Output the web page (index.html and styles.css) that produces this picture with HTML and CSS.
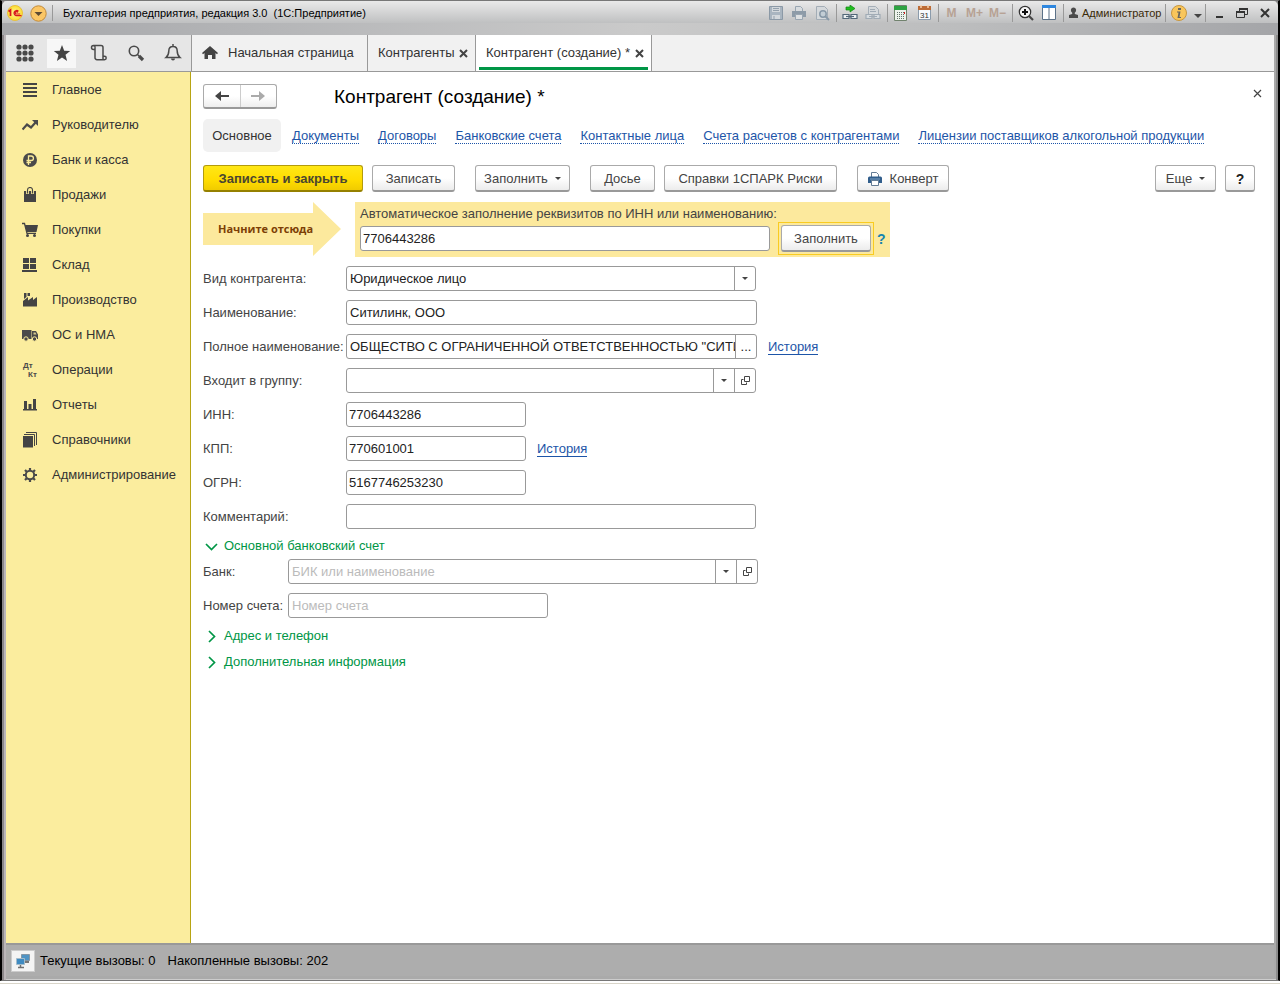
FILE: index.html
```html
<!DOCTYPE html>
<html lang="ru">
<head>
<meta charset="utf-8">
<title>Бухгалтерия предприятия, редакция 3.0</title>
<link rel="stylesheet" href="styles.css">
</head>
<body>
<div class="window">
<header class="titlebar">
  <svg class="logo" width="16" height="16" viewBox="0 0 16 16"><defs><radialGradient id="lg"><stop offset="0" stop-color="#fff6a0"/><stop offset="1" stop-color="#fbdc2c"/></radialGradient></defs><circle cx="8" cy="8" r="7.5" fill="url(#lg)" stroke="#e8bf3c"/><path d="M1.5 6.5 3.5 5v6" fill="none" stroke="#d8171d" stroke-width="1.7"/><path d="M11.500 6.300A2.600 2.600 0 1 0 9 10.600h5.500M10.600 7.600A1.200 1.200 0 1 0 9.200 9h4" fill="none" stroke="#d8171d" stroke-width="1.200"/></svg>
  <button class="flat" aria-label="Главное меню"><svg width="17" height="17" viewBox="0 0 17 17"><circle cx="8.500" cy="8.500" r="7.700" fill="#fbc665" stroke="#c28a3a"/><path d="M4.500 7h8l-4 4z" fill="#5d4a33"/></svg></button>
  <span class="title-sep"></span>
  <h1 class="app-title">Бухгалтерия предприятия, редакция 3.0&nbsp; (1С:Предприятие)</h1>
  <div class="tgroup first">
    <button class="flat cell" aria-label="Сохранить"><svg width="16" height="16" viewBox="0 0 16 16"><path d="M1.500 1.500h13v13h-13z" fill="#a9b5c0" stroke="#8b99a6"/><path d="M4 2h8v5H4zM4 10h8v4H4z" fill="#d3d8dc"/><path d="M5 3.500h6M5 5.500h6M6 11v3" stroke="#94a1ad"/></svg></button>
    <button class="flat cell" aria-label="Печать"><svg width="16" height="16" viewBox="0 0 16 16"><path d="M4.500 6V1.500h5l2 2V6" fill="#d8dcdf" stroke="#98a5b1"/><path d="M1 6h14v6H1z" fill="#8d9ba8"/><path d="M4.500 9.500h7v5h-7z" fill="#dde0e2" stroke="#98a5b1"/></svg></button>
    <button class="flat cell" aria-label="Просмотр"><svg width="16" height="16" viewBox="0 0 16 16"><path d="M2.500 1.500h8l3 3v10h-11z" fill="#d5d9dc" stroke="#a3adb6"/><circle cx="9" cy="9" r="3.200" fill="#c2cdd5" stroke="#8798a7" stroke-width="1.500"/><path d="m11 11 4 4" stroke="#8798a7" stroke-width="2"/></svg></button>
  </div>
  <div class="tgroup">
    <button class="flat cell" aria-label="Получить ссылку"><svg width="16" height="16" viewBox="0 0 16 16"><path d="M4 2h4V0l5 3.500L8 7V5H4z" fill="#20bf20" stroke="#138413" stroke-width=".7"/><path d="M1 9.500h6v4H1zM9 9.500h6v4H9z" fill="#edf1f3" stroke="#536879" stroke-width="1.200"/><path d="M4 11.500h8" stroke="#536879" stroke-width="1.200"/></svg></button>
    <button class="flat cell" aria-label="Перейти по ссылке"><svg width="16" height="16" viewBox="0 0 16 16"><path d="M3.500 1.500h7l3 3v5h-10z" fill="#d5d9dc" stroke="#a5afb8"/><path d="M1 9.500h6v4H1zM9 9.500h6v4H9zM4 11.500h8M5 4.500h5M5 6.500h6" fill="#d7dce0" stroke="#a0abb5" stroke-width="1.200"/></svg></button>
  </div>
  <div class="tgroup">
    <button class="flat cell" aria-label="Калькулятор"><svg width="16" height="16" viewBox="0 0 16 16"><path d="M1.500.5h12v15h-12z" fill="#edf3ec" stroke="#71826e"/><path d="M1 1h13v4H1z" fill="#2da242"/><path d="M4 7.500h7M4 9.500h7M4 11.500h7M4 13.500h7" stroke="#63746a" stroke-dasharray="1 1"/><path d="M11.500 7v2" stroke="#d42020"/></svg></button>
    <button class="flat cell" aria-label="Календарь"><svg width="16" height="16" viewBox="0 0 16 16"><path d="M2.500 1.500h12v13h-12z" fill="#f7fafc" stroke="#8b9bab"/><path d="M2 1h13v4H2z" fill="#bd6c36"/><path d="M5 0v3M12 0v3" stroke="#f8d2ad" stroke-width="1.500"/><text x="4" y="13" class="cal-day">31</text></svg></button>
  </div>
  <div class="tgroup">
    <button class="flat cell mem">M</button><button class="flat cell mem">M+</button><button class="flat cell mem">M−</button>
  </div>
  <div class="tgroup">
    <button class="flat cell" aria-label="Масштаб"><svg width="16" height="16" viewBox="0 0 16 16"><circle cx="7" cy="7" r="5.700" fill="#f4f4f4" stroke="#333" stroke-width="1.200"/><path d="M4 7h6M7 4v6" stroke="#111" stroke-width="2"/><path d="m11 11 4 4" stroke="#444" stroke-width="2.200"/></svg></button>
    <button class="flat cell" aria-label="Панели"><svg width="16" height="16" viewBox="0 0 16 16"><path d="M1.500 1.500h13v13h-13z" fill="#fff" stroke="#5b7187"/><path d="M1 0h14v3H1z" fill="#2e87df"/><path d="M8 3v12" stroke="#5b7187"/></svg></button>
  </div>
  <div class="tgroup user">
    <svg width="11" height="12" viewBox="0 0 11 12"><path d="M5.500.5a2.800 2.800 0 0 1 1.300 5.200v1.200L10 8v3H1V8l3.200-1.100V5.700A2.800 2.800 0 0 1 5.500.5z" fill="#4b4b4b"/></svg><span>Администратор</span>
  </div>
  <div class="tgroup info">
    <button class="flat" aria-label="Справка"><svg width="16" height="16" viewBox="0 0 16 16"><circle cx="8" cy="8" r="7.500" fill="#f9c65b" stroke="#c7963e"/><path d="M7 3h3v2H7zM6 6.500h3.500L8.500 12H10v1H6.500l1-5.500H6z" fill="#66655f"/></svg></button>
    <svg width="10" height="6" viewBox="0 0 10 6"><path d="M1 1h8L5 5z" fill="#444"/></svg>
  </div>
  <div class="tgroup win">
    <button class="flat cell" aria-label="Свернуть"><svg width="12" height="12" viewBox="0 0 12 12"><path d="M3 10h7" stroke="#333" stroke-width="2"/></svg></button>
    <button class="flat cell" aria-label="Восстановить"><svg width="12" height="12" viewBox="0 0 12 12"><path d="M3.500 4V1.500h8v6H9M.5 4.500h8v6h-8z" fill="none" stroke="#333"/><path d="M3 2h9M0 5h9" stroke="#333" stroke-width="2"/></svg></button>
    <button class="flat cell" aria-label="Закрыть"><svg width="12" height="12" viewBox="0 0 12 12"><path d="m2 2 8 8m0-8-8 8" stroke="#333" stroke-width="2"/></svg></button>
  </div>
</header>

<div class="topbar">
  <div class="tools">
    <button class="tool" aria-label="Меню функций"><svg width="18" height="18" viewBox="0 0 18 18" fill="#4a4a4a"><circle cx="3" cy="3" r="2.600"/><circle cx="9" cy="3" r="2.600"/><circle cx="15" cy="3" r="2.600"/><circle cx="3" cy="9" r="2.600"/><circle cx="9" cy="9" r="2.600"/><circle cx="15" cy="9" r="2.600"/><circle cx="3" cy="15" r="2.600"/><circle cx="9" cy="15" r="2.600"/><circle cx="15" cy="15" r="2.600"/></svg></button>
    <button class="tool on" aria-label="Избранное"><svg width="18" height="18" viewBox="0 0 18 18"><path d="m9 1 2.200 5.700 6 .3-4.700 3.800L14.100 17 9 13.500 3.900 17l1.600-6.200L.8 7l6-.3z" fill="#444"/></svg></button>
    <button class="tool" aria-label="История"><svg width="18" height="18" viewBox="0 0 18 18" fill="none" stroke="#4a4a4a" stroke-width="1.500"><path d="M5 5.500H3.500a2 2 0 0 1 0-4H11a2 2 0 0 1 2 2v9M5 3.500v10a2 2 0 0 0 2 2.200h7.500a1.700 1.700 0 0 0 0-3.400H13M3.500 1.500A1.700 1.700 0 0 1 5 3.500M13 12.500v3"/></svg></button>
    <button class="tool" aria-label="Поиск"><svg width="18" height="18" viewBox="0 0 18 18" fill="none" stroke="#4a4a4a"><circle cx="7" cy="7" r="4.700" stroke-width="1.600"/><path d="m10.500 10.500 2 2" stroke-width="1.500"/><path d="m12 12 4 4" stroke-width="3.200"/></svg></button>
    <button class="tool" aria-label="Оповещения"><svg width="18" height="18" viewBox="0 0 18 18"><path d="M9 2.500c-3 0-4.200 2-4.200 4.500 0 3-.5 4.500-2.800 6.500h14c-2.300-2-2.800-3.500-2.800-6.500 0-2.500-1.200-4.500-4.200-4.500zM9 0v2.500" fill="none" stroke="#4a4a4a" stroke-width="1.500"/><path d="M7 14.500h4a2 2 0 0 1-4 0z" fill="#4a4a4a"/></svg></button>
  </div>
  <nav class="tabs">
    <a class="tab home" href="#"><svg width="16" height="14" viewBox="0 0 16 14"><path d="M8 0 0 7l1 1.200 1.500-1.300V13H6V9h4v4h3.500V6.900L15 8.200 16 7z" fill="#444"/></svg>Начальная страница</a>
    <div class="tab list"><a href="#">Контрагенты</a><button class="flat" aria-label="Закрыть вкладку"><svg width="9" height="9" viewBox="0 0 9 9"><path d="m1 1 7 7m0-7-7 7" stroke="#444" stroke-width="2"/></svg></button></div>
    <div class="tab active"><a href="#">Контрагент (создание) *</a><button class="flat" aria-label="Закрыть вкладку"><svg width="9" height="9" viewBox="0 0 9 9"><path d="m1 1 7 7m0-7-7 7" stroke="#444" stroke-width="2"/></svg></button></div>
  </nav>
</div>

<div class="body">
<nav class="side">
  <a href="#"><svg width="16" height="16" viewBox="0 0 16 16"><path d="M1 2h14M1 6h14M1 10h14M1 14h14" stroke="#444" stroke-width="2"/></svg>Главное</a>
  <a href="#"><svg width="16" height="16" viewBox="0 0 16 16"><path d="m.5 12.500 4.500-5 4 3 4.500-5" fill="none" stroke="#4a4a4a" stroke-width="2.200"/><path d="M10 3h6v6z" fill="#4a4a4a"/></svg>Руководителю</a>
  <a href="#"><svg width="16" height="16" viewBox="0 0 16 16"><circle cx="8" cy="8" r="7" fill="#4a4a4a"/><path d="M6.500 13V4h2.700a2.200 2.200 0 0 1 0 4.500H4.500M4.500 10.500H9" fill="none" stroke="#fbec9a" stroke-width="1.300"/></svg>Банк и касса</a>
  <a href="#"><svg width="16" height="16" viewBox="0 0 16 16"><path d="M2 4h12v11H2z" fill="#444"/><path d="M5.500 7V3a2.500 2.500 0 0 1 5 0v4" fill="none" stroke="#fbec9a" stroke-width="2.800"/><path d="M5.500 6.500V3a2.500 2.500 0 0 1 5 0v3.500" fill="none" stroke="#444" stroke-width="1.100"/></svg>Продажи</a>
  <a href="#"><svg width="16" height="16" viewBox="0 0 16 16"><path d="M3 3h13l-1.500 7H4.500z" fill="#444"/><path d="M0 1.500h2.500l2.500 9.800h9" fill="none" stroke="#444" stroke-width="1.300"/><circle cx="5.500" cy="13.500" r="1.500" fill="#444"/><circle cx="12.500" cy="13.500" r="1.500" fill="#444"/></svg>Покупки</a>
  <a href="#"><svg width="16" height="16" viewBox="0 0 16 16"><path d="M1 1h6v5H1zM8 1h6v5H8zM1 7h6v5H1zM8 7h6v5H8zM0 13h15v2H0z" fill="#444"/></svg>Склад</a>
  <a href="#"><svg width="16" height="16" viewBox="0 0 16 16"><path d="M1 14.500V9l5-4v3.500L11 5v3l4-3v9.500zM2 1h2.500v4L2 7zM5.500 1H8v3L5.500 4z" fill="#444"/></svg>Производство</a>
  <a href="#"><svg width="16" height="16" viewBox="0 0 16 16"><path d="M0 3h9.500v9H0zM10 4h4l2 3.500V12h-6z" fill="#4a4a4a"/><path d="M11.500 5.500h2l1 2h-3z" fill="#d4c98d"/><circle cx="4" cy="12" r="2.200" fill="#4a4a4a" stroke="#fbec9a"/><circle cx="12.500" cy="12" r="2.200" fill="#4a4a4a" stroke="#fbec9a"/></svg>ОС и НМА</a>
  <a href="#"><svg width="16" height="16" viewBox="0 0 16 16"><text x="1" y="6" class="dk">Дт</text><text x="6" y="15" class="dk">Кт</text></svg>Операции</a>
  <a href="#"><svg width="16" height="16" viewBox="0 0 16 16"><path d="M2 4h3v8H2zM6.500 7h3v6h-3zM11 2h3v10h-3zM1 12h14v1.500H1z" fill="#444"/></svg>Отчеты</a>
  <a href="#"><svg width="16" height="16" viewBox="0 0 16 16"><path d="M1 4h10v11.500H1z" fill="#444"/><path d="M2 2.500h10.500V14M4 .5h10.500V13" fill="none" stroke="#444"/></svg>Справочники</a>
  <a href="#"><svg width="16" height="16" viewBox="0 0 16 16"><circle cx="8" cy="8" r="4.200" fill="none" stroke="#4a4a4a" stroke-width="2"/><path d="M8 1v3M8 12v3M1 8h3M12 8h3M3 3l2 2M11 11l2 2M13 3l-2 2M5 11l-2 2" stroke="#4a4a4a" stroke-width="2.200"/></svg>Администрирование</a>
</nav>

<main class="main">
  <div class="head">
    <div class="history"><button aria-label="Назад"><svg width="16" height="12" viewBox="0 0 16 12"><path d="M2 6h13" stroke="#444" stroke-width="2"/><path d="M1 6 7 1v10z" fill="#444"/></svg></button><button aria-label="Вперед"><svg width="16" height="12" viewBox="0 0 16 12"><path d="M1 6h13" stroke="#aaa" stroke-width="2"/><path d="M15 6 9 1v10z" fill="#aaa"/></svg></button></div>
    <h2>Контрагент (создание) *</h2>
    <button class="flat close" aria-label="Закрыть"><svg width="9" height="9" viewBox="0 0 9 9"><path d="m1 1 7 7m0-7-7 7" stroke="#444" stroke-width="1.200"/></svg></button>
  </div>
  <nav class="sections">
    <span class="current">Основное</span>
    <a href="#">Документы</a><a href="#">Договоры</a><a href="#">Банковские счета</a><a href="#">Контактные лица</a><a href="#">Счета расчетов с контрагентами</a><a href="#">Лицензии поставщиков алкогольной продукции</a>
  </nav>
  <div class="actions">
    <button class="btn primary">Записать и закрыть</button>
    <button class="btn save">Записать</button>
    <button class="btn fill apart">Заполнить<i class="caret"></i></button>
    <button class="btn dossier apart">Досье</button>
    <button class="btn spark">Справки 1СПАРК Риски</button>
    <button class="btn letter apart"><svg width="14" height="14" viewBox="0 0 14 14"><path d="M3.500 5V.5h5l2 2V5" fill="#fff" stroke="#647c95"/><path d="M0 6q0-1.500 1.500-1.500h11Q14 4.500 14 6v5H0z" fill="#315e8c"/><path d="M2 7h10" stroke="#7ea0c0"/><path d="M3.500 8.500h7v5h-7z" fill="#fff" stroke="#647c95"/></svg>Конверт</button>
    <button class="btn more">Еще<i class="caret"></i></button>
    <button class="btn help">?</button>
  </div>

  <div class="starter">
    <div class="arrow"><svg width="138" height="54" viewBox="0 0 138 54"><path d="M0 11h110V0l28 27-28 27V43H0z" fill="#fce99d"/></svg><span>Начните отсюда</span></div>
    <div class="auto">
      <label for="auto">Автоматическое заполнение реквизитов по ИНН или наименованию:</label>
      <div class="auto-row"><input class="field" id="auto" value="7706443286"><span class="focus"><button class="btn">Заполнить</button></span><a class="hint" href="#">?</a></div>
    </div>
  </div>

  <form class="form">
    <div class="row"><label for="kind">Вид контрагента:</label><div class="field combo"><select id="kind"><option>Юридическое лицо</option></select><span class="part"><i class="caret"></i></span></div></div>
    <div class="row"><label for="name">Наименование:</label><input class="field wide" id="name" value="Ситилинк, ООО"></div>
    <div class="row"><label for="full">Полное наименование:</label><div class="field combo wide"><input id="full" value="ОБЩЕСТВО С ОГРАНИЧЕННОЙ ОТВЕТСТВЕННОСТЬЮ &quot;СИТИЛИНК&quot;"><button type="button" class="part">...</button></div><a class="link" href="#">История</a></div>
    <div class="row"><label for="group">Входит в группу:</label><div class="field combo"><input id="group"><button type="button" class="part" aria-label="Выбрать"><i class="caret"></i></button><button type="button" class="part" aria-label="Открыть"><svg width="9" height="9" viewBox="0 0 9 9"><path d="M3.500.5h5v5h-5zM2.500 3.500h-2v5h5v-2" fill="none" stroke="#444"/></svg></button></div></div>
    <div class="row"><label for="inn">ИНН:</label><input class="field short" id="inn" value="7706443286"></div>
    <div class="row"><label for="kpp">КПП:</label><input class="field short" id="kpp" value="770601001"><a class="link" href="#">История</a></div>
    <div class="row"><label for="ogrn">ОГРН:</label><input class="field short" id="ogrn" value="5167746253230"></div>
    <div class="row"><label for="note">Комментарий:</label><input class="field" id="note"></div>
  </form>

  <button class="flat group-title open"><svg width="13" height="13" viewBox="0 0 13 13"><path d="m1 4 5.500 5.500L12 4" fill="none" stroke="#009646" stroke-width="1.700"/></svg>Основной банковский счет</button>
  <form class="form bank">
    <div class="row"><label for="bank">Банк:</label><div class="field combo"><input id="bank" placeholder="БИК или наименование"><button type="button" class="part" aria-label="Выбрать"><i class="caret"></i></button><button type="button" class="part" aria-label="Открыть"><svg width="9" height="9" viewBox="0 0 9 9"><path d="M3.500.5h5v5h-5zM2.500 3.500h-2v5h5v-2" fill="none" stroke="#444"/></svg></button></div></div>
    <div class="row"><label for="acc">Номер счета:</label><input class="field account" id="acc" placeholder="Номер счета"></div>
  </form>
  <button class="flat group-title"><svg width="13" height="13" viewBox="0 0 13 13"><path d="m4 1 5.500 5.500L4 12" fill="none" stroke="#009646" stroke-width="1.700"/></svg>Адрес и телефон</button>
  <button class="flat group-title"><svg width="13" height="13" viewBox="0 0 13 13"><path d="m4 1 5.500 5.500L4 12" fill="none" stroke="#009646" stroke-width="1.700"/></svg>Дополнительная информация</button>
</main>
</div>

<footer class="status">
  <span class="status-icon"><svg width="16" height="16" viewBox="0 0 16 16"><path d="M6.500 1.500h8v6h-8z" fill="#4e93c4" stroke="#8397a6"/><path d="M9 9h5" stroke="#777" stroke-width="2"/><path d="M1.500 5.500h8v6h-8z" fill="#3f8bc2" stroke="#a4bccb"/><path d="M5.500 12v2M3 14.500h6" stroke="#707070" stroke-width="1.500"/></svg></span>
  <span>Текущие вызовы: 0</span><span class="total">Накопленные вызовы: 202</span>
</footer>
</div>
</body>
</html>
```
FILE: styles.css
```css
* { box-sizing: border-box; }
body {
  margin: 0;
  min-height: 100vh;
  display: flex;
  flex-direction: column;
  background: #d9d5c9;
  font: 13px/16px "Liberation Sans", Arial, sans-serif;
  color: #333;
}
a { color: inherit; text-decoration: none; }
button, input, select { font: inherit; color: inherit; margin: 0; }
svg { display: block; flex: none; }
.window {
  flex: 1;
  display: flex;
  flex-direction: column;
  margin-bottom: 3px;
  padding: 0 4px 4px;
  background: #aaa;
  border: 2px solid #000;
  border-width: 1px 2px 1px 2px;
  border-top-color: #777;
  border-bottom-color: #777;
  box-shadow: inset 2px 0 #8b8789, inset 4px 0 #bbb6b9, inset -2px 0 #8b8b8b, inset 0 -1px #ccc, 0 2px #fff;
}
.flat { padding: 0; border: 0; background: none; }

.titlebar {
  display: flex;
  align-items: center;
  height: 34px;
  padding-bottom: 10px;
  margin: 0 -4px;
  padding-left: 5px;
  border-radius: 5px 5px 0 0;
  font-size: 11px;
  color: #000;
  background: linear-gradient(#e9e9e9, #bfc0c1) top / 100% 22px no-repeat, linear-gradient(90deg, #a6a7aa, #b4b5b7 20%, #cacaca 50%, #bcbdbe 75%, #a4a5a8);
}
.logo { margin-right: 7px; }
.title-sep { width: 1px; height: 16px; margin: 0 10px 0 5px; background: #999; }
.app-title { flex: 1; margin: 0; font-size: 11px; font-weight: normal; white-space: nowrap; }
.tgroup {
  display: flex;
  align-items: center;
  height: 18px;
  padding: 0 3px 0 1px;
  border-left: 1px solid #999;
}
.tgroup.first { border: 0; }
.cell { width: 23px; display: flex; justify-content: center; }
.cal-day { font-size: 8px; fill: #333; }
.mem { color: #b7a294; font-weight: bold; font-size: 12px; }
.user { width: 102px; gap: 3px; padding: 0 0 0 4px; color: #3a2a08; }
.info { width: 40px; gap: 6px; padding-left: 5px; }
.info > svg { margin-top: 6px; }
.win { padding-right: 2px; }

.topbar { display: flex; height: 37px; background: #f1f1f1; border-bottom: 1px solid #999; }
.tools { display: flex; align-items: center; width: 186px; border-right: 1px solid #999; background: #e6e6e6; }
.tool { width: 29px; height: 29px; margin: 0 4px; padding: 0; border: 0; background: none; display: flex; align-items: center; justify-content: center; }
.tool.on { background: #f7f7f7; }
.tabs { display: flex; }
.tab { display: flex; align-items: center; justify-content: space-between; padding: 0 7px 0 10px; border-right: 1px solid #999; white-space: nowrap; }
.tab.home { width: 176px; gap: 10px; justify-content: flex-start; }
.tab.list { width: 108px; }
.tab.active { width: 176px; background: linear-gradient(#009646, #009646) 3px 32px / calc(100% - 6px) 3px no-repeat #fff; }

.body { flex: 1; display: flex; }
.side { width: 185px; background: #fbed9e; border-right: 1px solid #b8a413; }
.side a { display: flex; align-items: center; gap: 14px; height: 35px; padding: 1px 0 0 16px; }
.dk { font-size: 8px; font-weight: bold; fill: #4a4a4a; }
.main { flex: 1; min-width: 0; padding: 12px 19px 12px 12px; background: #fff; }

.head { display: flex; align-items: center; height: 25px; }
.history { display: flex; width: 74px; height: 25px; border: 1px solid #aaa; border-bottom: 2px solid #999; border-radius: 3px; background: linear-gradient(#fff 50%, #eee); }
.history button { flex: 1; display: flex; align-items: center; justify-content: center; padding: 0; border: 0; background: none; }
.history button + button { border-left: 1px solid #ccc; }
.head h2 { flex: 1; margin: 0 0 0 57px; font-size: 19px; line-height: 24px; font-weight: normal; color: #000; }
.close { margin: 5px -7px 0 0; align-self: flex-start; }

.sections { display: flex; align-items: center; gap: 19px; margin-top: 10px; white-space: nowrap; }
.sections a { color: #1d55a8; line-height: 15px; padding-top: 1px; border-bottom: 1px dotted #1d55a8; }
.current { width: 78px; padding: 9px 0 8px; margin-right: -8px; text-align: center; background: #f1f1f1; border-radius: 5px; }

.actions { display: flex; gap: 9px; margin-top: 13px; }
.btn {
  display: flex;
  align-items: center;
  justify-content: center;
  height: 27px;
  padding: 1px 0 0;
  border: 1px solid #aaa;
  border-bottom: 2px solid #999;
  border-radius: 3px;
  background: linear-gradient(#fff 50%, #ececec);
  color: #444;
  white-space: nowrap;
}
.apart { margin-left: 11px; }
.primary { width: 160px; font-weight: bold; color: #4a4630; border-color: #b39b0c; border-bottom-color: #958000; background: linear-gradient(#ffe716, #ffdc00 60%, #f0cb00); }
.save { width: 83px; }
.fill { width: 95px; gap: 7px; }
.dossier { width: 65px; }
.spark { width: 173px; }
.letter { width: 92px; gap: 8px; }
.more { width: 61px; gap: 7px; margin-left: auto; }
.help { width: 30px; font-size: 14px; font-weight: bold; color: #222; }
.caret { width: 0; border: 3px solid transparent; border-top-color: #444; border-bottom: 0; }

.starter { display: flex; margin-top: 10px; gap: 14px; }
.arrow { position: relative; width: 138px; }
.arrow span { position: absolute; left: 15px; top: 19px; font: bold 11px/16px "Open Sans", sans-serif; color: #7c3f06; white-space: nowrap; }
.auto { width: 535px; height: 55px; padding: 4px 4px 0 5px; background: #fce99d; color: #444; }
.auto label { display: block; white-space: nowrap; }
.auto-row { display: flex; align-items: center; }
.focus { width: 96px; margin: 0 3px 0 8px; padding: 2px; border: 1px solid #f9cb20; }
.focus .btn { width: 100%; }
.hint { font-size: 14px; font-weight: bold; color: #1584b0; }

.form { display: flex; flex-direction: column; gap: 9px; margin-top: 9px; }
.row { display: flex; align-items: center; }
.row label { width: 143px; color: #444; white-space: nowrap; }
.field { width: 410px; height: 25px; padding: 0 3px; border: 1px solid #999; border-radius: 3px; background: #fff; color: #222; outline: 0; }
.auto-row .field, .field.short { padding-left: 2px; }
.field.wide { width: 411px; }
.field.short { width: 180px; }
.combo { display: flex; }
.combo input, .combo select { flex: 1; min-width: 0; padding: 0; border: 0; outline: 0; background: none; appearance: none; }
.combo .part { display: flex; align-items: center; justify-content: center; width: 21px; padding: 0; border: 0; border-left: 1px solid #999; background: none; }
.combo .part:last-child { margin-right: -3px; }
::placeholder { color: #bbb; opacity: 1; }
.link { margin-left: 11px; color: #1d55a8; line-height: 15px; border-bottom: 1px solid #1d55a8; }
.group-title { display: flex; align-items: center; gap: 6px; height: 16px; margin: 10px 0 0 2px; color: #009646; }
.group-title.open { margin-top: 9px; }
.bank { margin-top: 5px; }
.bank .row label { width: 85px; }
.bank .combo { width: 470px; }
.field.account { width: 260px; }

.status { display: flex; align-items: center; height: 33px; padding-left: 5px; border-top: 2px solid #999; background: #adadad; color: #000; }
.status-icon { display: flex; align-items: center; justify-content: center; width: 24px; height: 22px; margin-right: 5px; background: #f4f4f4; border: 1px solid #ccc; }
.total { margin-left: 12px; }
```
